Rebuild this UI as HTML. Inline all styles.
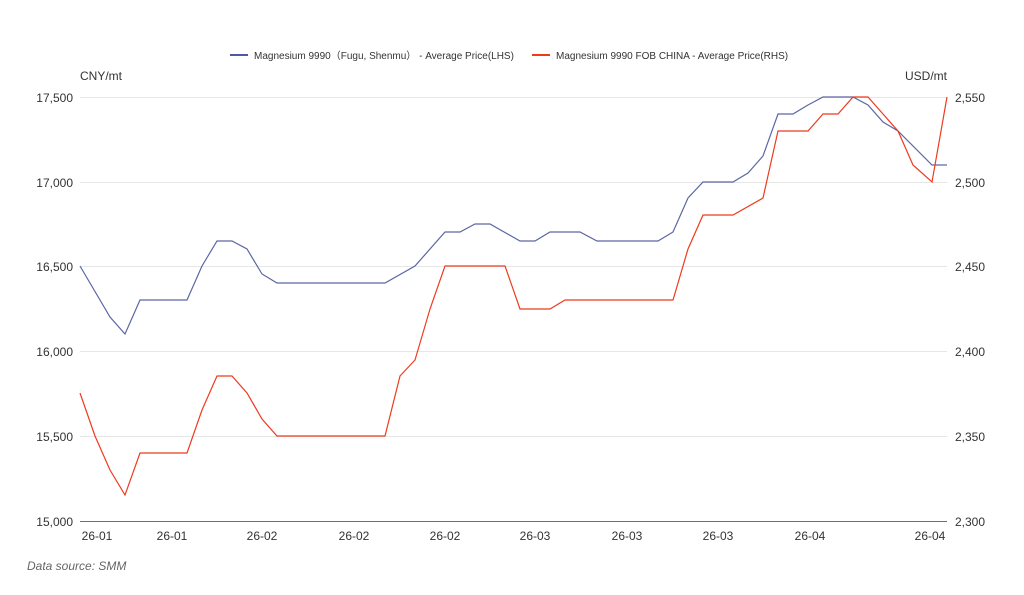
<!DOCTYPE html>
<html><head><meta charset="utf-8"><style>
body{margin:0;background:#fff;width:1024px;height:590px;overflow:hidden;font-family:"Liberation Sans",sans-serif}
</style></head><body>
<svg width="1024" height="590" xmlns="http://www.w3.org/2000/svg" font-family="Liberation Sans, sans-serif">
<g stroke="#e6e6e6" stroke-width="1">
<line x1="80" x2="947" y1="97.5" y2="97.5"/><line x1="80" x2="947" y1="182.5" y2="182.5"/>
<line x1="80" x2="947" y1="266.5" y2="266.5"/><line x1="80" x2="947" y1="351.5" y2="351.5"/>
<line x1="80" x2="947" y1="436.5" y2="436.5"/>
</g>
<line x1="80" x2="947" y1="521.5" y2="521.5" stroke="#6e7079"/>
<g font-size="12" fill="#333">
<text x="80" y="80">CNY/mt</text>
<text x="947" y="80" text-anchor="end">USD/mt</text>
</g>
<g font-size="12" fill="#333" text-anchor="end">
<text x="73" y="102">17,500</text><text x="73" y="187">17,000</text><text x="73" y="271">16,500</text>
<text x="73" y="356">16,000</text><text x="73" y="441">15,500</text><text x="73" y="526">15,000</text>
</g>
<g font-size="12" fill="#333">
<text x="955" y="102">2,550</text><text x="955" y="187">2,500</text><text x="955" y="271">2,450</text>
<text x="955" y="356">2,400</text><text x="955" y="441">2,350</text><text x="955" y="526">2,300</text>
</g>
<g font-size="12" fill="#333" text-anchor="middle">
<text x="97" y="540">26-01</text><text x="172" y="540">26-01</text><text x="262" y="540">26-02</text>
<text x="354" y="540">26-02</text><text x="445" y="540">26-02</text><text x="535" y="540">26-03</text>
<text x="627" y="540">26-03</text><text x="718" y="540">26-03</text><text x="810" y="540">26-04</text>
<text x="930" y="540">26-04</text>
</g>
<text x="27" y="570" font-size="12" font-style="italic" fill="#666">Data source:  SMM</text>
<g font-size="10" fill="#333">
<line x1="230" x2="248" y1="55" y2="55" stroke="#4d5a9c" stroke-width="2"/>
<text x="254" y="59">Magnesium 9990（Fugu, Shenmu） - Average Price(LHS)</text>
<line x1="532" x2="550" y1="55" y2="55" stroke="#ee3b1e" stroke-width="2"/>
<text x="556" y="59">Magnesium 9990 FOB CHINA - Average Price(RHS)</text>
</g>
<polyline fill="none" stroke="#5c66a3" stroke-width="1.2" points="80,266 110,317 125,334 140,300 187,300 202,266 217,241 232,241 247,249 262,274 277,283 385,283 415,266 445,232 460,232 475,224 490,224 520,241 535,241 550,232 580,232 597,241 658,241 673,232 688,198 703,182 733,182 748,173 763,156 778,114 793,114 808,105 823,97 853,97 868,105 883,122 898,131 932,165 947,165"/>
<polyline fill="none" stroke="#ee3b1e" stroke-width="1.2" points="80,393 95,436 110,470 125,495 140,453 187,453 202,410 217,376 232,376 247,393 262,419 277,436 385,436 400,376 415,360 430,309 445,266 505,266 520,309 550,309 565,300 673,300 688,249 703,215 733,215 763,198 778,131 808,131 823,114 838,114 853,97 868,97 883,114 898,131 913,165 932,182 947,97"/>
</svg>
</body></html>
